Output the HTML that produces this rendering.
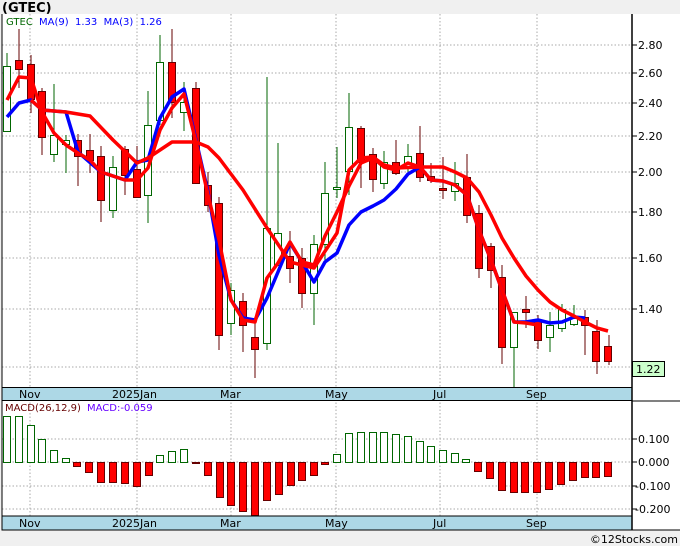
<!DOCTYPE html>
<html><head><meta charset="utf-8"><style>
html,body{margin:0;padding:0;width:680px;height:546px;overflow:hidden;background:#f0f0f0;font-family:"DejaVu Sans",sans-serif}
svg{display:block}
</style></head><body>
<svg width="680" height="546" viewBox="0 0 680 546" xmlns="http://www.w3.org/2000/svg" font-family="DejaVu Sans, Liberation Sans, sans-serif">
<rect x="0" y="0" width="680" height="546" fill="#f0f0f0"/>
<text x="2" y="12" font-size="13" font-weight="bold" fill="#000">(GTEC)</text>
<rect x="2" y="14" width="678" height="516" fill="#fff"/>
<g stroke="#aaa" stroke-dasharray="1.5,2" stroke-width="1">
<line x1="2" y1="45" x2="632" y2="45"/><line x1="2" y1="73" x2="632" y2="73"/><line x1="2" y1="103" x2="632" y2="103"/><line x1="2" y1="136" x2="632" y2="136"/><line x1="2" y1="172" x2="632" y2="172"/><line x1="2" y1="212" x2="632" y2="212"/><line x1="2" y1="258" x2="632" y2="258"/><line x1="2" y1="309" x2="632" y2="309"/><line x1="2" y1="367" x2="632" y2="367"/>
<line x1="2" y1="439" x2="632" y2="439"/><line x1="2" y1="462" x2="632" y2="462"/><line x1="2" y1="486" x2="632" y2="486"/><line x1="2" y1="509" x2="632" y2="509"/>
<line x1="30" y1="14" x2="30" y2="516"/><line x1="137" y1="14" x2="137" y2="516"/><line x1="231" y1="14" x2="231" y2="516"/><line x1="336" y1="14" x2="336" y2="516"/><line x1="440" y1="14" x2="440" y2="516"/><line x1="537" y1="14" x2="537" y2="516"/>
</g>
<g stroke-width="1">
<g stroke="#060"><line x1="7" y1="53" x2="7" y2="132"/><line x1="54" y1="84" x2="54" y2="162"/><line x1="66" y1="135" x2="66" y2="173"/><line x1="113" y1="156" x2="113" y2="218"/><line x1="148" y1="91" x2="148" y2="223"/><line x1="160" y1="35" x2="160" y2="125"/><line x1="184" y1="82" x2="184" y2="131"/><line x1="231" y1="283" x2="231" y2="335"/><line x1="267" y1="77" x2="267" y2="350"/><line x1="278" y1="143" x2="278" y2="265"/><line x1="314" y1="235" x2="314" y2="325"/><line x1="325" y1="162" x2="325" y2="265"/><line x1="337" y1="147" x2="337" y2="198"/><line x1="349" y1="93" x2="349" y2="195"/><line x1="384" y1="151" x2="384" y2="189"/><line x1="408" y1="144" x2="408" y2="172"/><line x1="455" y1="162" x2="455" y2="201"/><line x1="514" y1="312" x2="514" y2="387"/><line x1="550" y1="312" x2="550" y2="352"/><line x1="562" y1="304" x2="562" y2="332"/><line x1="574" y1="305" x2="574" y2="326"/></g>
<g fill="#fff" stroke="#060"><rect x="3.5" y="66.5" width="7" height="65"/><rect x="50.5" y="135.5" width="7" height="19"/><rect x="62.5" y="140.5" width="7" height="4"/><rect x="109.5" y="167.5" width="7" height="43"/><rect x="144.5" y="125.5" width="7" height="70"/><rect x="156.5" y="62.5" width="7" height="58"/><rect x="180.5" y="102.5" width="7" height="10"/><rect x="227.5" y="290.5" width="7" height="33"/><rect x="263.5" y="228.5" width="7" height="115"/><rect x="274.5" y="233.5" width="7" height="32"/><rect x="310.5" y="244.5" width="7" height="49"/><rect x="321.5" y="193.5" width="7" height="51"/><rect x="333.5" y="187.5" width="7" height="2"/><rect x="345.5" y="127.5" width="7" height="44"/><rect x="380.5" y="162.5" width="7" height="21"/><rect x="404.5" y="156.5" width="7" height="11"/><rect x="451.5" y="183.5" width="7" height="8"/><rect x="510.5" y="312.5" width="7" height="35"/><rect x="546.5" y="325.5" width="7" height="12"/><rect x="558.5" y="309.5" width="7" height="19"/><rect x="570.5" y="318.5" width="7" height="6"/></g>
<g stroke="#600"><line x1="19" y1="29" x2="19" y2="88"/><line x1="31" y1="55" x2="31" y2="113"/><line x1="42" y1="88" x2="42" y2="155"/><line x1="78" y1="134" x2="78" y2="186"/><line x1="90" y1="134" x2="90" y2="173"/><line x1="101" y1="146" x2="101" y2="222"/><line x1="125" y1="146" x2="125" y2="195"/><line x1="137" y1="146" x2="137" y2="198"/><line x1="172" y1="29" x2="172" y2="118"/><line x1="196" y1="82" x2="196" y2="183"/><line x1="208" y1="172" x2="208" y2="212"/><line x1="219" y1="197" x2="219" y2="350"/><line x1="243" y1="293" x2="243" y2="352"/><line x1="255" y1="320" x2="255" y2="378"/><line x1="290" y1="231" x2="290" y2="283"/><line x1="302" y1="248" x2="302" y2="308"/><line x1="361" y1="126" x2="361" y2="188"/><line x1="373" y1="148" x2="373" y2="192"/><line x1="396" y1="140" x2="396" y2="175"/><line x1="420" y1="126" x2="420" y2="182"/><line x1="431" y1="163" x2="431" y2="183"/><line x1="443" y1="157" x2="443" y2="199"/><line x1="467" y1="154" x2="467" y2="223"/><line x1="479" y1="205" x2="479" y2="278"/><line x1="491" y1="243" x2="491" y2="288"/><line x1="502" y1="265" x2="502" y2="364"/><line x1="526" y1="296" x2="526" y2="328"/><line x1="538" y1="315" x2="538" y2="349"/><line x1="585" y1="310" x2="585" y2="355"/><line x1="597" y1="320" x2="597" y2="374"/><line x1="609" y1="335" x2="609" y2="365"/></g>
<g fill="#f00" stroke="#600"><rect x="15.5" y="60.5" width="7" height="9"/><rect x="27.5" y="64.5" width="7" height="35"/><rect x="38.5" y="91.5" width="7" height="46"/><rect x="74.5" y="140.5" width="7" height="16"/><rect x="86.5" y="150.5" width="7" height="10"/><rect x="97.5" y="156.5" width="7" height="44"/><rect x="121.5" y="149.5" width="7" height="26"/><rect x="133.5" y="169.5" width="7" height="28"/><rect x="168.5" y="62.5" width="7" height="40"/><rect x="192.5" y="88.5" width="7" height="95"/><rect x="204.5" y="185.5" width="7" height="20"/><rect x="215.5" y="203.5" width="7" height="132"/><rect x="239.5" y="301.5" width="7" height="24"/><rect x="251.5" y="337.5" width="7" height="12"/><rect x="286.5" y="256.5" width="7" height="12"/><rect x="298.5" y="258.5" width="7" height="35"/><rect x="357.5" y="128.5" width="7" height="34"/><rect x="369.5" y="154.5" width="7" height="25"/><rect x="392.5" y="162.5" width="7" height="11"/><rect x="416.5" y="153.5" width="7" height="24"/><rect x="427.5" y="176.5" width="7" height="4"/><rect x="439.5" y="188.5" width="7" height="2"/><rect x="463.5" y="177.5" width="7" height="38"/><rect x="475.5" y="213.5" width="7" height="55"/><rect x="487.5" y="246.5" width="7" height="24"/><rect x="498.5" y="277.5" width="7" height="70"/><rect x="522.5" y="309.5" width="7" height="3"/><rect x="534.5" y="320.5" width="7" height="20"/><rect x="581.5" y="317.5" width="7" height="8"/><rect x="592.5" y="331.5" width="7" height="30"/><rect x="604.5" y="346.5" width="7" height="15"/></g>
</g>
<polyline fill="none" stroke="#00f" stroke-width="3.5" stroke-linejoin="round" points="7,117 19,103 31,100 42,110 54,111 66,112 78,152 101,172 125,180 137,162 148,160 160,118 172,97 184,89 196,140 208,192 219,255 231,300 243,318 255,320 267,298 278,272 290,243 302,262 314,282 325,262 337,253 349,225 361,212 373,206 384,200 396,189 408,174 420,167 431,180 443,181 455,185 467,195 479,230 491,260 502,290 514,322 526,322 538,320 550,323 562,322 574,317 585,318"/>
<polyline fill="none" stroke="#f00" stroke-width="3.5" stroke-linejoin="round" points="31,100 42,110 66,112 90,116 113,140 137,163 148,158 172,142 196,142 208,147 219,158 243,190 267,228 290,262 314,268 337,233 349,170 361,158 373,157 384,165 396,168 420,167 443,167 455,172 467,178 479,192 491,215 502,238 514,258 526,276 538,290 550,302 562,310 574,316 585,322 597,328 608,331"/>
<polyline fill="none" stroke="#f00" stroke-width="3.5" stroke-linejoin="round" points="7,100 19,77 31,78 42,112 54,133 66,145 78,153 90,160 101,172 125,180 137,180 148,168 160,130 172,108 184,94 196,142 208,195 219,240 231,300 243,320 255,322 267,278 278,263 290,242 302,262 314,265 325,236 337,212 349,186 361,163 373,158 384,167 396,170 408,163 420,167 431,180 443,181 455,185 467,195 479,230 491,260 502,290 514,322 526,323 538,325"/>
<text x="6" y="25" font-size="10" fill="#060">GTEC</text>
<text x="39" y="25" font-size="10" fill="#00f" xml:space="preserve">MA(9)  1.33  MA(3)  1.26</text>
<g fill="#fff" stroke="#060"><rect x="3.5" y="416.5" width="7" height="46"/><rect x="15.5" y="416.5" width="7" height="46"/><rect x="27.5" y="425.5" width="7" height="37"/><rect x="38.5" y="439.5" width="7" height="23"/><rect x="50.5" y="450.5" width="7" height="12"/><rect x="62.5" y="458.5" width="7" height="4"/><rect x="156.5" y="455.5" width="7" height="7"/><rect x="168.5" y="451.5" width="7" height="11"/><rect x="180.5" y="449.5" width="7" height="13"/><rect x="333.5" y="454.5" width="7" height="8"/><rect x="345.5" y="433.5" width="7" height="29"/><rect x="357.5" y="432.5" width="7" height="30"/><rect x="369.5" y="432.5" width="7" height="30"/><rect x="380.5" y="432.5" width="7" height="30"/><rect x="392.5" y="434.5" width="7" height="28"/><rect x="404.5" y="436.5" width="7" height="26"/><rect x="416.5" y="441.5" width="7" height="21"/><rect x="427.5" y="446.5" width="7" height="16"/><rect x="439.5" y="450.5" width="7" height="12"/><rect x="451.5" y="453.5" width="7" height="9"/><rect x="462.5" y="459.5" width="7" height="3"/></g>
<g fill="#f00" stroke="#600"><rect x="73.5" y="462.5" width="7" height="4"/><rect x="85.5" y="462.5" width="7" height="10"/><rect x="97.5" y="462.5" width="7" height="20"/><rect x="109.5" y="462.5" width="7" height="20"/><rect x="121.5" y="462.5" width="7" height="21"/><rect x="133.5" y="462.5" width="7" height="24"/><rect x="145.5" y="462.5" width="7" height="13"/><rect x="192.5" y="462.5" width="7" height="1"/><rect x="204.5" y="462.5" width="7" height="13"/><rect x="216.5" y="462.5" width="7" height="35"/><rect x="227.5" y="462.5" width="7" height="43"/><rect x="239.5" y="462.5" width="7" height="49"/><rect x="251.5" y="462.5" width="7" height="53"/><rect x="263.5" y="462.5" width="7" height="38"/><rect x="275.5" y="462.5" width="7" height="32"/><rect x="287.5" y="462.5" width="7" height="23"/><rect x="298.5" y="462.5" width="7" height="18"/><rect x="310.5" y="462.5" width="7" height="13"/><rect x="321.5" y="462.5" width="7" height="2"/><rect x="474.5" y="462.5" width="7" height="9"/><rect x="486.5" y="462.5" width="7" height="16"/><rect x="498.5" y="462.5" width="7" height="28"/><rect x="510.5" y="462.5" width="7" height="30"/><rect x="521.5" y="462.5" width="7" height="30"/><rect x="533.5" y="462.5" width="7" height="30"/><rect x="545.5" y="462.5" width="7" height="27"/><rect x="557.5" y="462.5" width="7" height="22"/><rect x="569.5" y="462.5" width="7" height="18"/><rect x="581.5" y="462.5" width="7" height="15"/><rect x="592.5" y="462.5" width="7" height="15"/><rect x="604.5" y="462.5" width="7" height="14"/></g>
<text x="5" y="411" font-size="10" fill="#600">MACD(26,12,9)</text>
<text x="87" y="411" font-size="10" fill="#60f">MACD:-0.059</text>
<rect x="2" y="387.5" width="630" height="13" fill="#add8e6" stroke="#000"/>
<rect x="2" y="516" width="630" height="14" fill="#add8e6" stroke="#000"/>
<g font-size="11" fill="#000"><text x="19" y="398">Nov</text><text x="112" y="398">2025Jan</text><text x="220" y="398">Mar</text><text x="325" y="398">May</text><text x="433" y="398">Jul</text><text x="526" y="398">Sep</text>
<text x="19" y="527">Nov</text><text x="112" y="527">2025Jan</text><text x="220" y="527">Mar</text><text x="325" y="527">May</text><text x="433" y="527">Jul</text><text x="526" y="527">Sep</text></g>
<line x1="2" y1="14" x2="2" y2="530" stroke="#000"/>
<line x1="632" y1="14" x2="632" y2="530" stroke="#000" stroke-width="1.5"/>
<line x1="632" y1="401" x2="680" y2="401" stroke="#000"/>
<line x1="2" y1="530" x2="680" y2="530" stroke="#000"/>
<g stroke="#000"><line x1="632" y1="45" x2="637" y2="45"/><line x1="632" y1="73" x2="637" y2="73"/><line x1="632" y1="103" x2="637" y2="103"/><line x1="632" y1="136" x2="637" y2="136"/><line x1="632" y1="172" x2="637" y2="172"/><line x1="632" y1="212" x2="637" y2="212"/><line x1="632" y1="258" x2="637" y2="258"/><line x1="632" y1="309" x2="637" y2="309"/><line x1="632" y1="439" x2="637" y2="439"/><line x1="632" y1="462" x2="637" y2="462"/><line x1="632" y1="486" x2="637" y2="486"/><line x1="632" y1="509" x2="637" y2="509"/></g>
<g font-size="11" fill="#000"><text x="638" y="49">2.80</text><text x="638" y="77">2.60</text><text x="638" y="107">2.40</text><text x="638" y="140">2.20</text><text x="638" y="176">2.00</text><text x="638" y="216">1.80</text><text x="638" y="262">1.60</text><text x="638" y="313">1.40</text>
<text x="638" y="443">0.100</text><text x="638" y="466">0.000</text><text x="635" y="490">-0.100</text><text x="635" y="513">-0.200</text></g>
<rect x="632.5" y="361.5" width="32" height="15" fill="#ccffcc" stroke="#000"/>
<text x="636" y="373" font-size="11" fill="#000">1.22</text>
<text x="678" y="543" font-size="11" fill="#000" text-anchor="end">©12Stocks.com</text>
</svg>
</body></html>
